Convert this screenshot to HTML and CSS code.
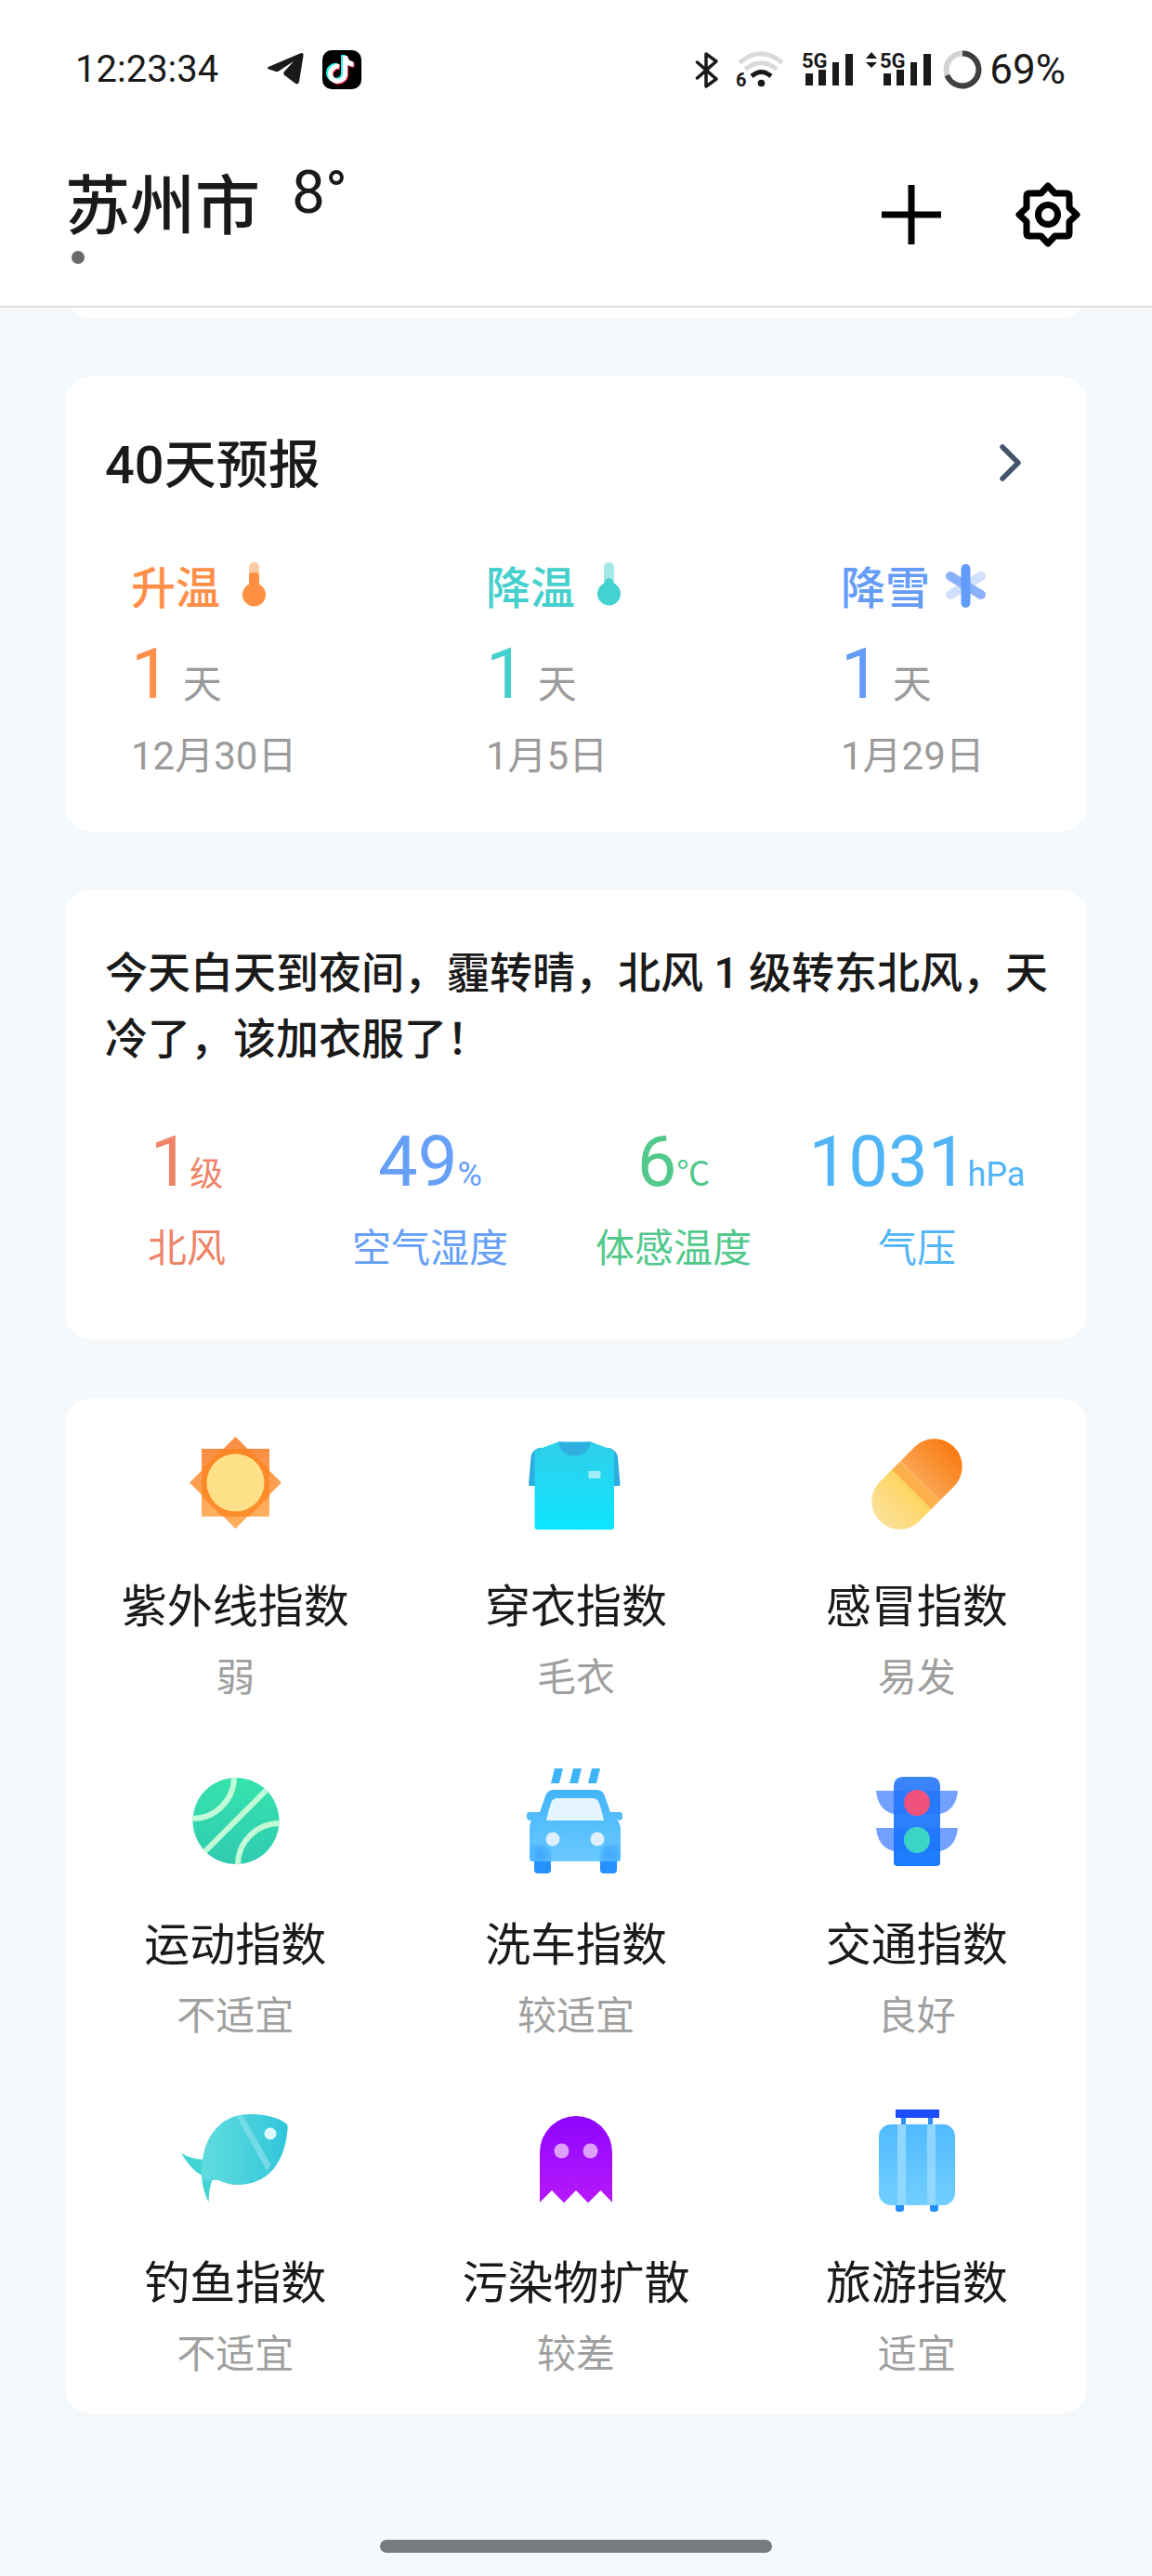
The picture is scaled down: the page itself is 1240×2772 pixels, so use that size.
FILE: index.html
```html
<!DOCTYPE html>
<html lang="zh-CN">
<head>
<meta charset="utf-8">
<meta name="viewport" content="width=device-width, initial-scale=1">
<title>苏州市天气</title>
<link rel="stylesheet" href="styles.css">
</head>
<body>
<div class="top">
  <div class="status">
    <div class="status-left">
      <time class="clock">12:23:34</time>
      <svg class="telegram" width="40" height="42" viewBox="0 0 40 42"><path d="M3 17.500 36 3.500Q40 2 39.500 6L35 34Q34 38 30.500 35.500L20 27.500Q17 25.500 19 23L29 12 13 22.500Q11 24 8.500 22.500L2.500 20.500Q-1 19 3 17.500Z" fill="#1a1a1a"/></svg>
      <svg class="tiktok" width="42" height="42" viewBox="0 0 42 42"><rect width="42" height="42" rx="10"/><g fill="none" stroke-width="5"><path d="M18 17.500a8 8 0 1 0 6.500 8V6c0 5 4 9 9 9" stroke="#25f4ee" transform="translate(-2 -1)"/><path d="M18 17.500a8 8 0 1 0 6.500 8V6c0 5 4 9 9 9" stroke="#fe2c55" transform="translate(1 1)"/><path d="M18 17.500a8 8 0 1 0 6.500 8V6c0 5 4 9 9 9" stroke="#fff"/></g></svg>
    </div>
    <div class="status-right">
      <svg class="bt" width="24" height="42" viewBox="0 0 24 42"><path d="M1.500 13 22 31 11 39V4l11 8L1.500 30" fill="none" stroke="#1a1a1a" stroke-width="3.500" stroke-linejoin="round" stroke-linecap="round"/></svg>
      <svg class="wifi" width="52" height="42" viewBox="0 0 52 42"><g fill="none" stroke-width="5"><path d="M3 13.500Q26-6 49 13.500" stroke="#dadada"/><path d="M9.500 20.500Q26 7 43 20.500" stroke="#dadada"/><path d="M16 28Q26.500 19 37 28" stroke="#1a1a1a"/></g><circle cx="26.500" cy="35.500" r="3.800" fill="#1a1a1a"/><text x="-1" y="39" class="tiny">6</text></svg>
      <svg class="signal" width="56" height="42" viewBox="0 0 56 42"><text x="0" y="19" class="net">5G</text><path d="M4 25h8v13H4zM18 21h8v17h-8zM33 13h7v25h-7zM47 4h8v34h-8z" fill="#1a1a1a"/></svg>
      <svg class="signal" width="72" height="42" viewBox="0 0 72 42"><path d="M1 9 7 2l6 7zM1 13h12l-6 6z" fill="#1a1a1a"/><text x="16" y="19" class="net">5G</text><path d="M20 25h8v13h-8zM34 21h8v17h-8zM49 13h7v25h-7zM63 4h8v34h-8z" fill="#1a1a1a"/></svg>
      <svg class="ring" width="42" height="42" viewBox="0 0 42 42"><circle cx="21" cy="21" r="17.500" fill="none" stroke="#d3d3d3" stroke-width="6"/><path d="M21 3.500A17.500 17.500 0 1 1 4.500 27" fill="none" stroke="#404040" stroke-width="6"/></svg>
      <span class="battery">69%</span>
    </div>
  </div>
  <header class="header">
    <div class="place">
      <div class="place-row"><h1 class="city">苏州市</h1><span class="temp">8°</span></div>
      <span class="page-dot"></span>
    </div>
    <div class="actions">
      <button type="button" class="icon-button" aria-label="添加城市"><svg width="72" height="72" viewBox="0 0 72 72"><path d="M36 4v64M4 36h64" stroke="#000" stroke-width="7"/></svg></button>
      <button type="button" class="icon-button" aria-label="设置"><svg width="72" height="72" viewBox="0 0 72 72"><g fill="none" stroke="#000" stroke-width="7" stroke-linejoin="round"><path d="M36 5 43.500 13H56Q59 13 59 16V28.500L67 36 59 43.500V56Q59 59 56 59H43.500L36 67 28.500 59H16Q13 59 13 56V43.500L5 36 13 28.500V16Q13 13 16 13H28.500Z"/><circle cx="36" cy="36" r="10.500"/></g></svg></button>
    </div>
  </header>
</div>
<main class="feed">
  <div class="card previous"></div>

  <section class="card forecast">
    <div class="card-head">
      <h2 class="card-title">40天预报</h2>
      <a class="more" href="#forecast" aria-label="查看40天预报"><svg width="32" height="48" viewBox="0 0 32 48"><path d="M7 4 24 21 7 38" fill="none" stroke="#44546c" stroke-width="5.500" stroke-linecap="round" stroke-linejoin="round"/></svg></a>
    </div>
    <div class="trend">
      <div class="trend-item warm">
        <div class="trend-label">升温<svg width="48" height="64" viewBox="0 0 48 64"><path d="M19 20V8.500a5.500 5.500 0 0 1 11 0V20z" fill="#ffc9a4"/><rect x="19" y="14" width="11" height="24" rx="4" fill="#ff8f42"/><circle cx="24.500" cy="38" r="12.500" fill="#ff8f42"/></svg></div>
        <div class="trend-days"><b>1</b><span>天</span></div>
        <div class="trend-date">12月30日</div>
      </div>
      <div class="trend-item cool">
        <div class="trend-label">降温<svg width="48" height="64" viewBox="0 0 48 64"><path d="M19 34V8.500a5.500 5.500 0 0 1 11 0V34z" fill="#a2e9e5"/><path d="M18.500 27 21 22q3.500-4 7 0l2.500 5z" fill="#43d2d0"/><circle cx="24.500" cy="37" r="12.500" fill="#43d2d0"/></svg></div>
        <div class="trend-days"><b>1</b><span>天</span></div>
        <div class="trend-date">1月5日</div>
      </div>
      <div class="trend-item snow">
        <div class="trend-label">降雪<svg width="52" height="64" viewBox="0 0 52 64"><g stroke-width="10" stroke-linecap="round"><path d="M43 18 10 38" stroke="#cfdffd"/><path d="M10 18 43 38" stroke="#89b0fa"/><path d="M26.500 10v37" stroke="#629cfb"/></g></svg></div>
        <div class="trend-days"><b>1</b><span>天</span></div>
        <div class="trend-date">1月29日</div>
      </div>
    </div>
  </section>

  <section class="card today">
    <p class="summary">今天白天到夜间，霾转晴，北风 1 级转东北风，天冷了，该加衣服了！</p>
    <div class="stats">
      <div class="stat wind"><div class="stat-value"><b>1</b><span>级</span></div><div class="stat-label">北风</div></div>
      <div class="stat humidity"><div class="stat-value"><b>49</b><span>%</span></div><div class="stat-label">空气湿度</div></div>
      <div class="stat feels"><div class="stat-value"><b>6</b><span>℃</span></div><div class="stat-label">体感温度</div></div>
      <div class="stat pressure"><div class="stat-value"><b>1031</b><span>hPa</span></div><div class="stat-label">气压</div></div>
    </div>
  </section>

  <section class="card indices">
    <div class="index">
      <svg width="120" height="120" viewBox="0 0 120 120"><defs><linearGradient id="sun" x1="0" y1="0" x2="0" y2="1"><stop stop-color="#f9812e"/><stop offset="1" stop-color="#ffa84e"/></linearGradient></defs><path d="M24 23h73v73H24z" fill="url(#sun)" opacity=".9"/><path d="M60.500 10 110 59.500 60.500 109 11 59.500z" fill="url(#sun)" opacity=".9"/><path d="M46 23.500H75L97 45V74L75 96H46L24 74V45z" fill="#fd8520" opacity=".7"/><circle cx="60.500" cy="59.500" r="31" fill="#fee188"/></svg>
      <h3>紫外线指数</h3><p>弱</p>
    </div>
    <div class="index">
      <svg width="120" height="120" viewBox="0 0 120 120"><defs><linearGradient id="shirt" x1="0" y1="0" x2="0" y2="1"><stop stop-color="#30cfe9"/><stop offset="1" stop-color="#0ce5ff"/></linearGradient></defs><path d="M20 22Q12 25 11.500 32L9 61q0 2 2 2H106q2 0 1.500-2L105 32q-1-7-9-10z" fill="#2eaee0"/><path d="M15.500 25 41 15.500H76L101 25V107q0 3-3 3H18.500q-3 0-3-3z" fill="url(#shirt)"/><path d="M41 15.500Q58 17 76 15.500 73 30.500 58 30.500 44 30.500 41 15.500z" fill="#2eafe0"/><path d="M73.500 47H86.500v8h-13z" fill="#a0eef9"/></svg>
      <h3>穿衣指数</h3><p>毛衣</p>
    </div>
    <div class="index">
      <svg width="120" height="120" viewBox="0 0 120 120"><defs><linearGradient id="pillA"><stop stop-color="#fba450"/><stop offset="1" stop-color="#fb7a12"/></linearGradient><linearGradient id="pillB"><stop stop-color="#fbe09a"/><stop offset="1" stop-color="#ffd560"/></linearGradient></defs><g transform="translate(60 61) rotate(-45)"><path d="M-7-30H-26.500a30 30 0 0 0 0 60H-7z" fill="url(#pillB)"/><path d="M5-30H26.500a30 30 0 0 1 0 60H5z" fill="url(#pillA)"/><path d="M-8-30H5V30H-8z" fill="#fdaf4d"/></g></svg>
      <h3>感冒指数</h3><p>易发</p>
    </div>
    <div class="index">
      <svg width="120" height="120" viewBox="0 0 120 120"><defs><linearGradient id="ball" x1="0" y1="0" x2="0" y2="1"><stop stop-color="#36e3ad"/><stop offset="1" stop-color="#2fcbb0"/></linearGradient><clipPath id="ballClip"><circle cx="61" cy="59.500" r="46.500"/></clipPath></defs><circle cx="61" cy="59.500" r="46.500" fill="url(#ball)"/><g clip-path="url(#ballClip)" fill="none" stroke="#c0fad6" stroke-width="6"><path d="M100 20 23 97"/><circle cx="14" cy="12" r="45"/><circle cx="108" cy="107" r="45"/></g></svg>
      <h3>运动指数</h3><p>不适宜</p>
    </div>
    <div class="index">
      <svg width="120" height="120" viewBox="0 0 120 120"><defs><linearGradient id="car" x1="0" y1="0" x2="0" y2="1"><stop stop-color="#43b4fa"/><stop offset="1" stop-color="#69c9ff"/></linearGradient><radialGradient id="tyre"><stop stop-color="#2493ff"/><stop offset="1" stop-color="#2493ff" stop-opacity="0"/></radialGradient></defs><path d="M37 3h9l-4 16h-9zM57 3h9l-4 16h-9zM77 3h9l-4 16h-9z" fill="#3fb4f8"/><path d="M15 98h18v14q0 4-4 4H19q-4 0-4-4zM86 98h18v14q0 4-4 4H90q-4 0-4-4z" fill="#2491ff"/><path d="M36 26H82q7 0 9 7l6 17h10q3 0 3 3v3q0 3-4 3l-2-1q4 5 4 10V100q0 3-3 3H13q-3 0-3-3V68q0-5 2-10l-1 1q-4 0-4-3v-3q0-3 3-3h11l6-17q2-7 9-7z" fill="url(#car)"/><path d="M39 35H79q3 0 5 3 3 7 6 21H28q3-14 6-21 2-3 5-3z" fill="#e5f5ff"/><path d="M10 85H25q10 5 9 18H13q-3 0-3-3zM108 85H94q-10 5-9 18h20q3 0 3-3z" fill="#3fa5ff" opacity=".35"/><circle cx="22" cy="96" r="13" fill="url(#tyre)" opacity=".5"/><circle cx="97" cy="96" r="13" fill="url(#tyre)" opacity=".5"/><circle cx="35" cy="79" r="7.500" fill="#e1f0ff"/><circle cx="83" cy="79" r="7.500" fill="#e1f0ff"/></svg>
      <h3>洗车指数</h3><p>较适宜</p>
    </div>
    <div class="index">
      <svg width="120" height="120" viewBox="0 0 120 120"><defs><linearGradient id="light" x1="0" y1="0" x2="0" y2="1"><stop stop-color="#3c84fa"/><stop offset="1" stop-color="#1b7cff"/></linearGradient></defs><path d="M16 27H104Q102 48 85 52H35Q18 48 16 27zM16 67H104Q102 88 85 92H35Q18 88 16 67z" fill="#73a1ff"/><path d="M46 12H74q11 0 11 11V104q0 4-4 4H39q-4 0-4-4V23q0-11 11-11z" fill="url(#light)"/><path d="M35 27H85V52H35zM35 67H85V92H35z" fill="#186eff" opacity=".4"/><circle cx="60" cy="40" r="14" fill="#f0527c"/><circle cx="60" cy="80" r="14" fill="#3bd5c8"/></svg>
      <h3>交通指数</h3><p>良好</p>
    </div>
    <div class="index">
      <svg width="120" height="120" viewBox="0 0 120 120"><defs><linearGradient id="fish"><stop stop-color="#62dcdf"/><stop offset="1" stop-color="#30c6da"/></linearGradient></defs><path d="M2 53Q12 59 26 60L36 80Q32 90 31.500 106 25 93 24 77 12 70 2 53z" fill="#42d5d3"/><path d="M24 77C23 38 42 11 77 11 94 11 108 15 116 22Q117 24 116.500 27C114 62 96 87 63 87 49 87 43 80 36 82 30 84 25 82 24 77z" fill="url(#fish)"/><path d="M62 14 68 12 99 66 94 72z" fill="#72dbe6"/><circle cx="98" cy="32" r="6.500" fill="#dcfaff"/></svg>
      <h3>钓鱼指数</h3><p>不适宜</p>
    </div>
    <div class="index">
      <svg width="120" height="120" viewBox="0 0 120 120"><defs><linearGradient id="ghost" x1="0" y1="0" x2="0" y2="1"><stop stop-color="#8e05fd"/><stop offset="1" stop-color="#b719fc"/></linearGradient></defs><path d="M21 106V52a39 39 0 0 1 78 0V106L86.500 93 73 106.500 60 93 47 106.500 34 93z" fill="url(#ghost)"/><circle cx="44.500" cy="50.500" r="8" fill="#dda0fb"/><circle cx="75.500" cy="50.500" r="8" fill="#dda0fb"/></svg>
      <h3>污染物扩散</h3><p>较差</p>
    </div>
    <div class="index">
      <svg width="120" height="120" viewBox="0 0 120 120"><defs><linearGradient id="bag" x1="0" y1="0" x2="0" y2="1"><stop stop-color="#51baff"/><stop offset="1" stop-color="#71ceff"/></linearGradient></defs><path d="M43 12h5v12h-5zM72 12h5v12h-5z" fill="#2f8cf7"/><path d="M37 6H84v9H37z" fill="#1d4cff"/><path d="M37 104h9v9q0 3-3 3h-3q-3 0-3-3zM74 104h9v9q0 3-3 3h-3q-3 0-3-3z" fill="#238ffa"/><rect x="19" y="22" width="82" height="87" rx="13" fill="url(#bag)"/><path d="M39 22h9v87h-9zM71 22h9v87h-9z" fill="#90d7ff"/></svg>
      <h3>旅游指数</h3><p>适宜</p>
    </div>
  </section>
</main>
<footer class="nav"><span class="nav-handle"></span></footer>
</body>
</html>
```
FILE: styles.css
```css
* { box-sizing: border-box; }

body {
  margin: 0;
  background: #f5f9fc;
  color: #1a1a1a;
  font-family: Roboto, "Noto Sans CJK SC", sans-serif;
}

h1, h2, h3, p { margin: 0; font-weight: 400; }
b { font-weight: 400; }
svg { display: block; flex: none; overflow: visible; }

/* status bar and header; the feed scrolls underneath */
.top {
  position: relative;
  z-index: 1;
  background: #fff;
  border-bottom: 2px solid #dedede;
}
.status {
  display: flex;
  justify-content: space-between;
  padding: 51px 93px 0 81px;
  line-height: 48px;
  color: #1a1a1a;
}
.status-left, .status-right { display: flex; align-items: center; }
.clock { font-size: 40px; }
.telegram { margin-left: 52px; }
.tiktok { margin-left: 20px; }
.wifi { margin-left: 20px; }
.signal { margin-left: 18px; }
.signal + .signal { margin-left: 12px; }
.ring { margin: 0 8px 0 12px; }
.battery { font-size: 44px; }
.net { font-size: 22px; font-weight: 700; fill: #1a1a1a; }
.tiny { font-size: 20px; font-weight: 700; fill: #1a1a1a; }

.header {
  display: flex;
  justify-content: space-between;
  align-items: flex-start;
  padding: 84px 76px 45px 70px;
}
.place-row { display: flex; align-items: flex-start; gap: 34px; }
.city { font-size: 70px; line-height: 80px; font-weight: 500; }
.temp { font-size: 64px; line-height: 50px; }
.page-dot {
  display: block;
  width: 14px;
  height: 14px;
  margin: 7px 0 0 7px;
  border-radius: 50%;
  background: #696969;
}
.actions { display: flex; gap: 75px; }
.icon-button {
  display: flex;
  align-items: center;
  height: 96px;
  padding: 0;
  border: 0;
  background: none;
}

/* cards */
.feed {
  display: flex;
  flex-direction: column;
  gap: 63px;
  padding: 0 70px;
}
.card { border-radius: 28px; background: #fff; }
.previous { height: 60px; margin-top: -49px; }

.forecast { padding: 64px 0 57px; }
.card-head {
  display: flex;
  justify-content: space-between;
  align-items: center;
  height: 64px;
  padding: 0 66px 0 43px;
}
.card-title { font-size: 56px; line-height: 64px; font-weight: 500; }
.trend {
  display: grid;
  grid-template-columns: 1fr 1fr 216px;
  padding: 69px 49px 0 71px;
}
.trend-label {
  display: flex;
  gap: 12px;
  font-size: 48px;
  line-height: 64px;
  font-weight: 500;
}
.trend-days {
  display: flex;
  align-items: baseline;
  gap: 13px;
  height: 80px;
  margin: 19px 0 25px;
}
.trend-days b { font-size: 76px; line-height: 80px; }
.trend-days span, .trend-date {
  font-size: 42px;
  line-height: 48px;
  color: #9b9b9b;
}
.warm { color: #ff8f48; }
.cool { color: #45cfcd; }
.snow { color: #659cf8; }

.today { padding: 54px 0 74px; }
.summary {
  padding: 0 24px 0 43px;
  font-size: 46px;
  line-height: 71px;
  font-weight: 500;
}
.stats {
  display: grid;
  grid-template-columns: repeat(4, 1fr);
  padding: 56px 52px 0 0;
  text-align: center;
}
.stat-value {
  display: flex;
  justify-content: center;
  align-items: baseline;
  height: 80px;
  margin-bottom: 30px;
}
.stat-value b { font-size: 76px; line-height: 80px; }
.stat-value span { font-size: 36px; line-height: 48px; }
.stat-label { font-size: 42px; line-height: 48px; }
.wind { color: #ee8468; }
.humidity { color: #659ff8; }
.feels { color: #52c98b; }
.pressure { color: #50b5f6; }

.indices {
  display: grid;
  grid-template-columns: repeat(3, 1fr);
}
.index {
  display: flex;
  flex-direction: column;
  align-items: center;
  padding: 31px 0 39px;
}
.index h3 { margin: 46px 0 24px; font-size: 49px; line-height: 56px; }
.index p { font-size: 42px; line-height: 48px; color: #9f9f9f; }

/* system gesture bar */
.nav { padding: 136px 0 25px; }
.nav-handle {
  display: block;
  width: 34%;
  height: 14px;
  margin: 0 auto;
  border-radius: 7px;
  background: #787c7f;
}
```
